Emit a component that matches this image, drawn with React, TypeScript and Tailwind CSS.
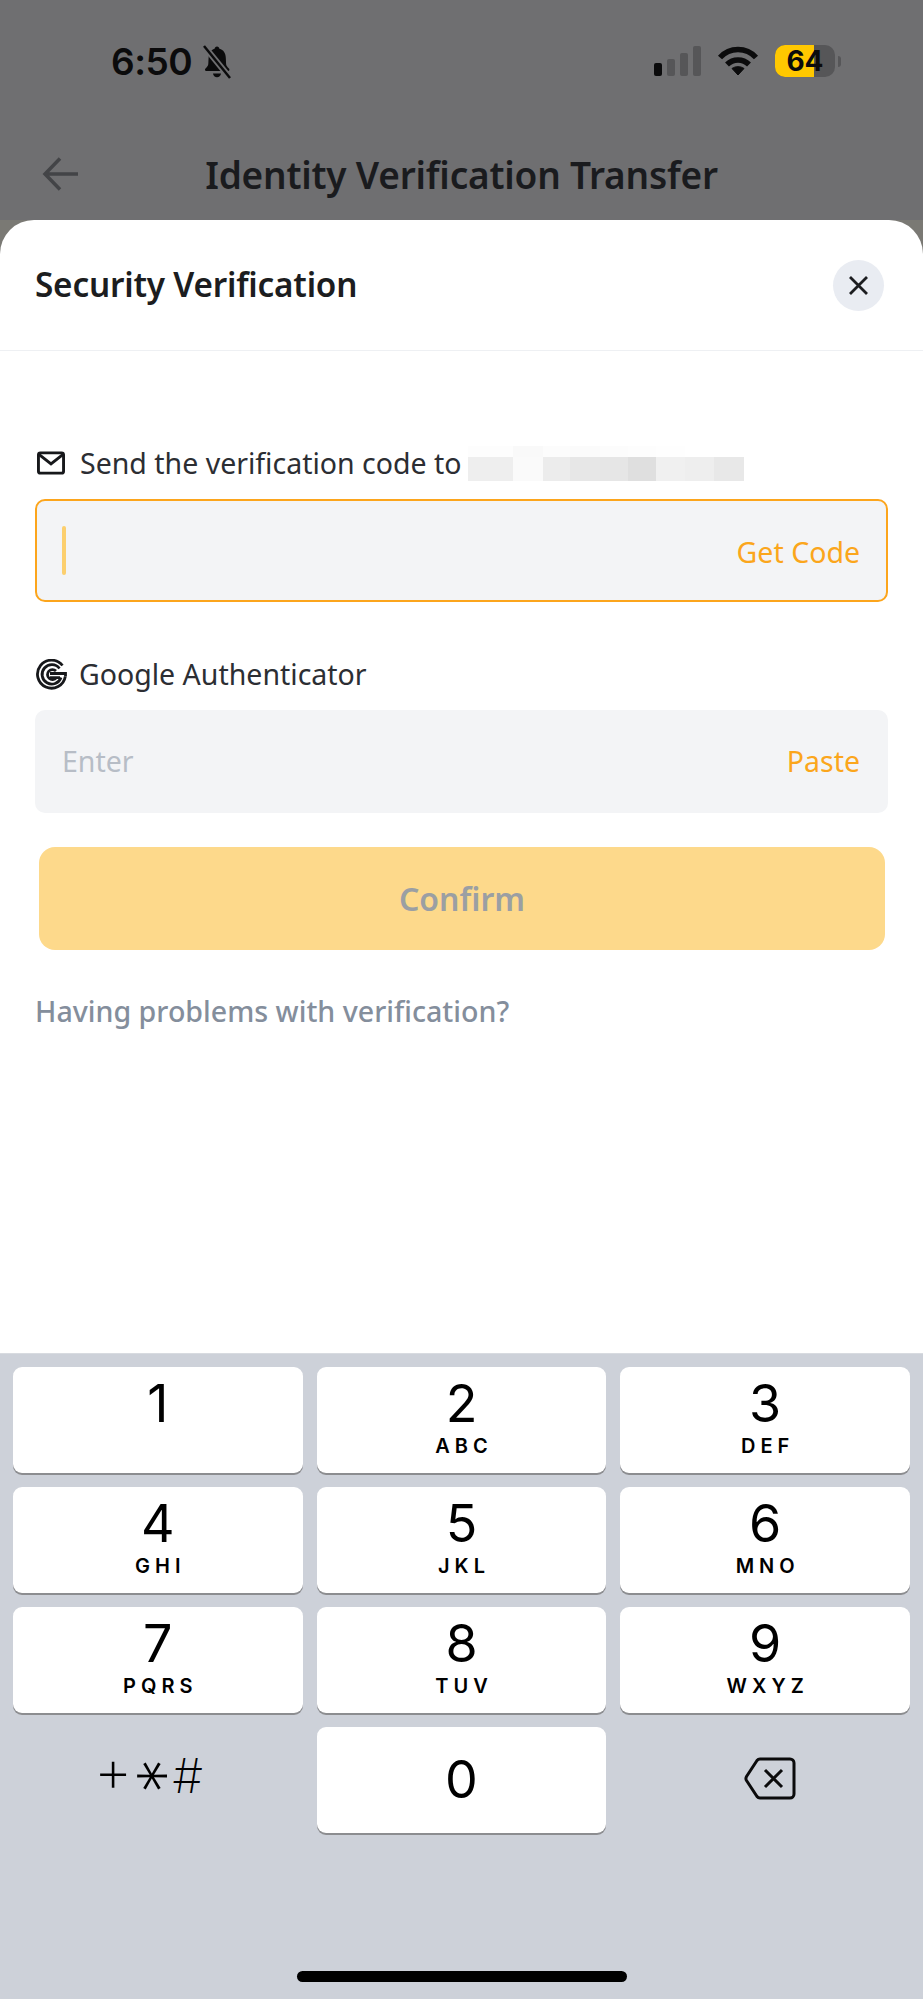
// App.tsx
const keys = [
  ["1", ""],
  ["2", "ABC"],
  ["3", "DEF"],
  ["4", "GHI"],
  ["5", "JKL"],
  ["6", "MNO"],
  ["7", "PQRS"],
  ["8", "TUV"],
  ["9", "WXYZ"],
];

// pixelated smudge over the email address
const blurTop = ["w-[45px] bg-[#fdfdfd]", "w-[30px] bg-[#f9f9f9]", "w-[27px] bg-[#fcfcfc]", "w-[30px] bg-[#fbfbfb]", "w-[28px] bg-[#fcfcfc]", "w-[28px] bg-[#fdfdfd]", "w-[29px] bg-[#fefefe]", "w-[29px] bg-[#ffffff]", "w-[30px] bg-[#ffffff]"];
const blurBottom = ["w-[45px] bg-[#eeeeee]", "w-[30px] bg-[#fafafa]", "w-[27px] bg-[#ececec]", "w-[30px] bg-[#e7e7e7]", "w-[28px] bg-[#e6e6e6]", "w-[28px] bg-[#dfdfdf]", "w-[29px] bg-[#f0f0f0]", "w-[29px] bg-[#eeeeee]", "w-[30px] bg-[#e8e8e8]"];

function StatusBar() {
  return (
    <div className="h-[124px] pt-[40px] pl-[111px] pr-[82px] flex items-start justify-between">
      <div className="flex items-center gap-[9px] h-[44px]">
        <span className="font-['Inter'] text-[37px] font-semibold text-[#0b0b0c] tracking-[-0.5px]">6:50</span>
        <svg width="32" height="36" viewBox="0 0 32 34" fill="#0b0b0c">
          <path d="M16 1.500c1.400 0 2.300 1 2.400 2.300 4.200 1 6.200 4.400 6.400 9l.3 6.200c.1 1.600 1.200 3 3 4.800.7.8.3 2.200-1 2.200H5.300c-1.300 0-1.700-1.400-1-2.200 1.800-1.800 2.900-3.200 3-4.800l.3-6.200c.2-4.600 2.200-8 6-9 .1-1.300 1-2.300 2.400-2.300z" />
          <path d="M12 28.500h8c-.3 2.300-1.900 3.800-4 3.800s-3.700-1.500-4-3.800z" />
          <path d="M3 1l26 32" stroke="#6f6f71" strokeWidth="6" />
          <path d="M3 1l26 32" stroke="#0b0b0c" strokeWidth="2.500" />
        </svg>
      </div>
      <div className="flex items-start gap-[16px] pt-[6px]">
        <div className="flex items-end gap-[5px] h-[30px]">
          <div className="w-[8px] h-[13px] rounded-[2px] bg-[#0b0b0c]" />
          <div className="w-[8px] h-[17px] rounded-[2px] bg-[#565658]" />
          <div className="w-[8px] h-[23px] rounded-[2px] bg-[#565658]" />
          <div className="w-[8px] h-[30px] rounded-[2px] bg-[#565658]" />
        </div>
        <svg width="42" height="30" viewBox="0 0 42 30" fill="none" stroke="#0b0b0c" strokeWidth="5.500">
          <path d="M3 11.500C8 6 14 3.500 21 3.500s13 2.500 18 8" />
          <path d="M10 18.500c3-3 6.800-4.600 11-4.600s8 1.600 11 4.600" />
          <path d="M15 22.500c1.700-1.200 3.700-1.800 6-1.800s4.300.6 6 1.800L21 29z" fill="#0b0b0c" strokeWidth="1" />
        </svg>
        <div className="flex items-center gap-[3px] -mt-[1px]">
          <div className="relative w-[60px] h-[32px] rounded-[10px] bg-[#565658] overflow-hidden flex items-center justify-center">
            <div className="absolute left-0 top-0 bottom-0 w-[39px] bg-[#ffc800]" />
            <span className="relative font-['Inter'] text-[28px] font-bold text-[#0b0b0c] leading-none">64</span>
          </div>
          <div className="w-[3px] h-[11px] rounded-r-full bg-[#565658]" />
        </div>
      </div>
    </div>
  );
}

function NavBar() {
  return (
    <div className="relative h-[96px] pt-[6px] flex items-center justify-center">
      <svg className="absolute left-[42px] top-[33px]" width="37" height="34" viewBox="0 0 37 34" fill="none" stroke="#434447" strokeWidth="3.500">
        <path d="M18 1.500L3 17l15 15.500M3 17h33" />
      </svg>
      <span className="text-[37px] font-semibold text-[#1a1b1e] tracking-[-0.2px]">Identity Verification Transfer</span>
    </div>
  );
}

function Sheet() {
  return (
    <div className="h-[1133px] bg-[#7a7974]">
      <div className="h-full bg-white rounded-t-[34px] flex flex-col">
        <div className="h-[131px] border-b border-[#eef0f3] pl-[35px] pr-[39px] flex items-center justify-between">
          <span className="text-[33.300px] font-semibold text-[#1c1d20] tracking-[-0.2px]">Security Verification</span>
          <button className="w-[51px] h-[51px] rounded-full bg-[#e9ecf2] flex items-center justify-center">
            <svg width="21" height="21" viewBox="0 0 21 21" fill="none" stroke="#1c1d20" strokeWidth="2.800">
              <path d="M2 2l17 17M19 2L2 19" />
            </svg>
          </button>
        </div>

        <div className="px-[35px] pt-[94px]">
          <div className="flex items-center h-[36px]">
            <svg className="ml-[2px]" width="28" height="24" viewBox="0 0 29 24" fill="none" stroke="#17181b" strokeWidth="3">
              <rect x="1.500" y="1.500" width="26" height="21" rx="2" />
              <path d="M2 3l12.500 10L27 3" />
            </svg>
            <span className="ml-[15px] text-[28.500px] text-[#2c2e33]">Send the verification code to</span>
            <div className="ml-[6px] flex flex-col w-[276px]">
              <div className="flex h-[11px]">
                {blurTop.map((c, i) => <div key={i} className={c} />)}
              </div>
              <div className="flex h-[24px]">
                {blurBottom.map((c, i) => <div key={i} className={c} />)}
              </div>
            </div>
          </div>

          <div className="mt-[18px] h-[103px] w-[853px] rounded-[10px] border-2 border-[#fca51c] bg-[#f3f4f6] pl-[25px] pr-[26px] flex items-center justify-between">
            <div className="w-[4px] h-[49px] rounded-full bg-[#fccf6e]" />
            <span className="mt-[3px] text-[28.500px] text-[#fba61c]">Get Code</span>
          </div>

          <div className="mt-[54px] flex items-center h-[36px]">
            <svg className="ml-[1px]" width="31" height="31" viewBox="0 0 31 31" fill="none" stroke="#17181b" strokeWidth="2.800">
              <path d="M26.500 6.500A14 14 0 1 0 29.300 17.500" />
              <path d="M23.500 9.500A9.700 9.700 0 1 0 25 18.500" />
              <path d="M20 12A5 5 0 1 0 20.300 18.800" />
              <path d="M14 14.500h15.500v3M14 18.700h10" />
            </svg>
            <span className="ml-[12px] text-[28.500px] text-[#2c2e33]">Google Authenticator</span>
          </div>

          <div className="mt-[18px] h-[103px] w-[853px] rounded-[10px] bg-[#f3f4f6] pl-[27px] pr-[28px] flex items-center justify-between">
            <span className="text-[28.500px] text-[#b7bdc6]">Enter</span>
            <span className="text-[28.500px] text-[#fba61c]">Paste</span>
          </div>

          <button className="mt-[34px] ml-[4px] h-[103px] w-[846px] rounded-[16px] bg-[#fdd98b] text-[32px] font-semibold text-[#9b9fa3] flex items-center justify-center">
            Confirm
          </button>

          <div className="mt-[41px] text-[28.600px] font-medium text-[#848e9c] leading-[40px]">Having problems with verification?</div>
        </div>
      </div>
    </div>
  );
}

function Keypad() {
  return (
    <div className="flex-1 bg-[#cdd1d9] border-t border-[#d8dbe0] pt-[13px] px-[13px] flex flex-col">
      <div className="grid grid-cols-3 gap-x-[14px] gap-y-[14px] font-['Inter'] text-black">
        {keys.map(([n, l]) => (
          <div key={n} className="h-[106px] rounded-[9px] bg-white shadow-[0_2px_0_#8c8d90] flex flex-col items-center pt-[7px]">
            <span className="text-[52px] leading-[60px] font-[380]">{n}</span>
            {l && <span className="text-[20px] leading-[24px] font-semibold tracking-[5px] pl-[5px]">{l}</span>}
          </div>
        ))}
        <div className="h-[106px] flex items-center justify-center pb-[20px] pr-[19px] font-extralight">
          <span className="text-[60px] leading-[56px]">+</span>
          <span className="text-[72px] leading-[56px] rotate-90 translate-y-[6px] -translate-x-[9px]">*</span>
          <span className="ml-[4px] text-[48px] leading-[56px] translate-y-[6px]">#</span>
        </div>
        <div className="h-[106px] rounded-[9px] bg-white shadow-[0_2px_0_#8c8d90] flex flex-col items-center justify-center">
          <span className="text-[52px] leading-[60px] font-[380]">0</span>
        </div>
        <div className="h-[106px] flex items-start justify-center pt-[30px] pl-[10px]">
          <svg width="52" height="43" viewBox="0 0 52 43" fill="none" stroke="#0b0b0c" strokeWidth="3">
            <path d="M16 2h30a4 4 0 0 1 4 4v31a4 4 0 0 1-4 4H16a4 4 0 0 1-3-1.500L2.500 23.500a4 4 0 0 1 0-4L13 3.500A4 4 0 0 1 16 2z" strokeLinejoin="round" />
            <path d="M21 13l17 17M38 13L21 30" />
          </svg>
        </div>
      </div>
      <div className="mt-auto mb-[17px] mx-auto w-[330px] h-[11px] rounded-full bg-black" />
    </div>
  );
}

export default function App() {
  return (
    <div className="w-[923px] h-[1999px] flex flex-col bg-[#6f6f71] font-['Noto_Sans',sans-serif] overflow-hidden">
      <StatusBar />
      <NavBar />
      <Sheet />
      <Keypad />
    </div>
  );
}
